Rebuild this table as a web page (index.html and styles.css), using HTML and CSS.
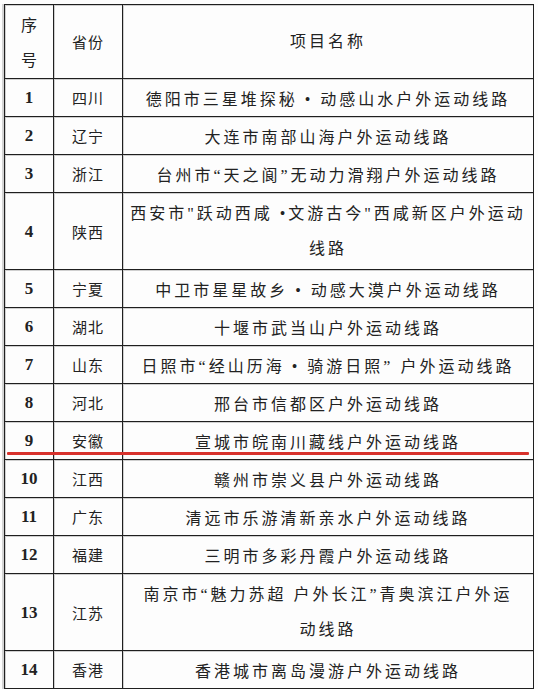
FILE: index.html
```html
<!DOCTYPE html>
<html lang="zh-CN">
<head>
<meta charset="utf-8">
<title>户外运动线路</title>
<link rel="stylesheet" href="styles.css">
</head>
<body>
<div class="sheet">
  <table class="routes">
    <colgroup>
      <col class="c-no">
      <col class="c-prov">
      <col class="c-name">
    </colgroup>
    <thead>
      <tr class="head">
        <th class="no-h">序<br>号</th>
        <th class="prov">省份</th>
        <th class="name">项目名称</th>
      </tr>
    </thead>
    <tbody>
      <tr><td class="no">1</td><td class="prov">四川</td><td class="name">德阳市三星堆探秘 • 动感山水户外运动线路</td></tr>
      <tr><td class="no">2</td><td class="prov">辽宁</td><td class="name">大连市南部山海户外运动线路</td></tr>
      <tr><td class="no">3</td><td class="prov">浙江</td><td class="name">台州市“天之阆”无动力滑翔户外运动线路</td></tr>
      <tr class="tall"><td class="no">4</td><td class="prov">陕西</td><td class="name">西安市"跃动西咸 •文游古今"西咸新区户外运动<br>线路</td></tr>
      <tr><td class="no">5</td><td class="prov">宁夏</td><td class="name">中卫市星星故乡 • 动感大漠户外运动线路</td></tr>
      <tr><td class="no">6</td><td class="prov">湖北</td><td class="name">十堰市武当山户外运动线路</td></tr>
      <tr><td class="no">7</td><td class="prov">山东</td><td class="name">日照市“经山历海 • 骑游日照” 户外运动线路</td></tr>
      <tr><td class="no">8</td><td class="prov">河北</td><td class="name">邢台市信都区户外运动线路</td></tr>
      <tr><td class="no">9</td><td class="prov">安徽</td><td class="name">宣城市皖南川藏线户外运动线路</td></tr>
      <tr><td class="no">10</td><td class="prov">江西</td><td class="name">赣州市崇义县户外运动线路</td></tr>
      <tr><td class="no">11</td><td class="prov">广东</td><td class="name">清远市乐游清新亲水户外运动线路</td></tr>
      <tr><td class="no">12</td><td class="prov">福建</td><td class="name">三明市多彩丹霞户外运动线路</td></tr>
      <tr class="tall"><td class="no">13</td><td class="prov">江苏</td><td class="name">南京市“魅力苏超 户外长江”青奥滨江户外运<br>动线路</td></tr>
      <tr><td class="no">14</td><td class="prov">香港</td><td class="name">香港城市离岛漫游户外运动线路</td></tr>
    </tbody>
  </table>
  <div class="mark"></div>
</div>
</body>
</html>
```

FILE: styles.css
```css
html, body {
  margin: 0;
  padding: 0;
  background: #fdfdfd;
}

.sheet {
  position: relative;
  padding: 4px 0 0 4px;
  width: 530px;
}

.routes {
  border-collapse: collapse;
  width: 529px;
  table-layout: fixed;
  color: #222;
  font-family: "Liberation Serif", "Noto Sans CJK SC", serif;
  border: 1px solid #1a1a1a;
  box-shadow: -2px 0 0 #d4d4d4;
}

.c-no { width: 49px; }
.c-prov { width: 69px; }
.c-name { width: 411px; }

.routes th,
.routes td {
  border: 1px solid #1f1f1f;
  box-shadow: inset 1px 1px 0 #cfcfcf;
  text-align: center;
  vertical-align: middle;
  padding: 0;
  font-weight: normal;
  height: 37px;
}

.routes tr.head th {
  height: 73px;
  line-height: 35px;
}

.routes tr.tall td {
  height: 76px;
  line-height: 35px;
}

.no-h {
  font-family: "Noto Sans CJK SC", sans-serif;
  font-size: 16px;
}

.no {
  font-size: 17px;
  font-weight: bold !important;
  letter-spacing: 0;
}

.prov {
  font-family: "Noto Sans CJK SC", sans-serif;
  font-size: 15px;
  letter-spacing: 1px;
}

.name {
  font-family: "Liberation Serif", "Noto Sans CJK SC", serif;
  font-size: 16px;
  letter-spacing: 3px;
}

.head .name {
  letter-spacing: 3px;
}

.mark {
  position: absolute;
  left: 7px;
  top: 452px;
  width: 522px;
  height: 3px;
  background: #d8322c;
  border-radius: 1px;
}
```
